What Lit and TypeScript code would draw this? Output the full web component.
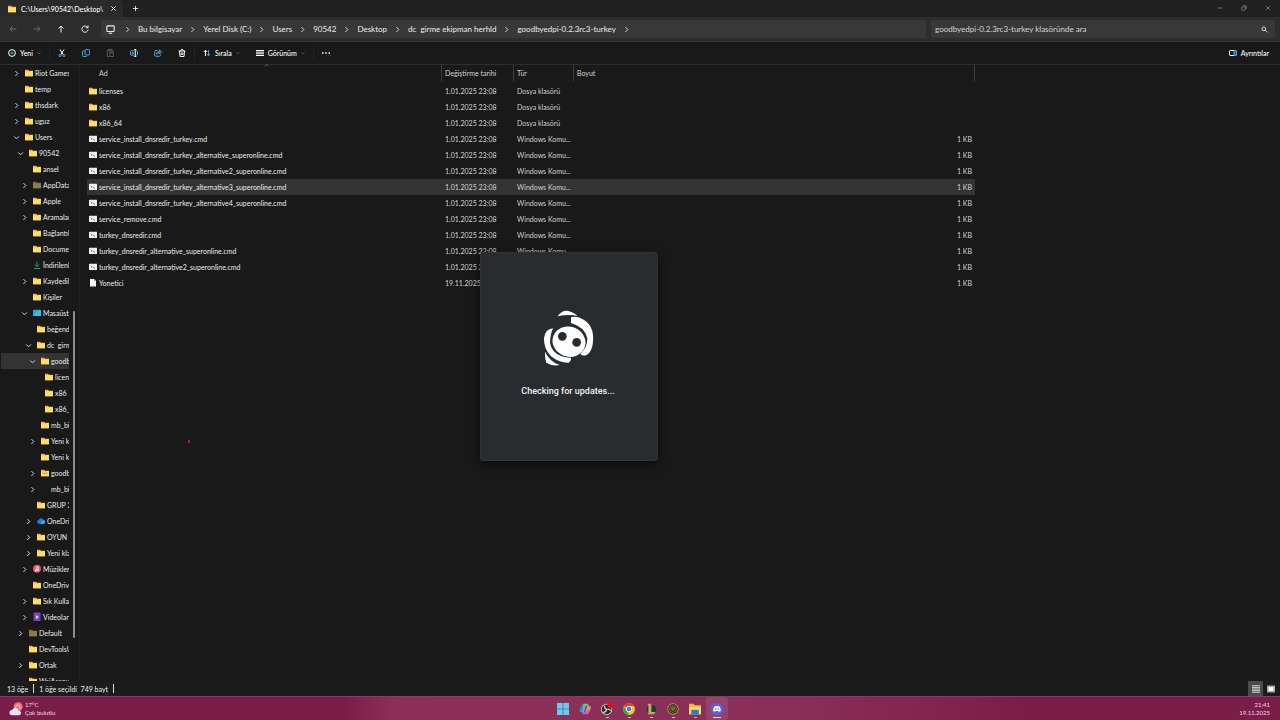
import { LitElement, html, css, svg, nothing } from "lit";
import { customElement, property } from "lit/decorators.js";
import { classMap } from "lit/directives/class-map.js";
import { styleMap } from "lit/directives/style-map.js";

const icons: Record<string, unknown> = {
  folder: svg`<path d="M0 1.500h6l2 2h8v11H0z" fill="#e8b931"/><path d="M0 4.500h16v10H0z" fill="#ffdc70"/>`,
  dim: svg`<path d="M0 1.500h6l2 2h8v11H0z" fill="#7d6c33"/><path d="M0 4.500h16v10H0z" fill="#8c7d47"/>`,
  zip: svg`<path d="M0 1.500h6l2 2h8v11H0z" fill="#e8b931"/><path d="M0 4.500h16v10H0z" fill="#ffdc70"/><path d="M3 8.500h10" stroke="#8d7a3c" stroke-width="1.500"/>`,
  cmd: svg`<rect x="0" y="1.500" width="16" height="12.500" rx="1" fill="#f1f1f1"/><path d="M3.500 5.500l3 2-2 2M8 8l4 3" stroke="#555" stroke-width="1.500" fill="none"/>`,
  file: svg`<path d="M2 0h8l4 4v11H2z" fill="#f6f6f6"/><path d="M10 0v4h4z" fill="#a9a9a9"/>`,
  download: svg`<path d="M8 1v10M3.500 7L8 11.500 12.500 7M2 15h12" stroke="#23a878" stroke-width="1.800" fill="none"/>`,
  desktop: svg`<rect y="1.500" width="16" height="12.500" rx="1.500" fill="#26a9d6"/><path d="M0 12L13 2h3v12H0z" fill="#3fcbe0" opacity=".7"/>`,
  cloud: svg`<path d="M4 13.500a4 4 0 0 1-.6-7.900A5.200 5.200 0 0 1 13 6a3.800 3.800 0 0 1-.5 7.500z" fill="#1c7fe0"/><path d="M6 13.500L13 6a3.800 3.800 0 0 1-.5 7.500z" fill="#3fb4f5"/>`,
  music: svg`<circle cx="8" cy="7.500" r="8" fill="#d9596b"/><path d="M6.500 11V4.500l4-1V10" stroke="#fff" stroke-width="1.400" fill="none"/><circle cx="5.500" cy="11" r="1.700" fill="#fff"/><circle cx="9.500" cy="10" r="1.700" fill="#fff"/>`,
  video: svg`<rect x="1" y="-1" width="14" height="17" rx="1.500" fill="#8140c9"/><path d="M1 2h2v2H1zm0 5h2v2H1zm0 5h2v2H1zM13 2h2v2h-2zm0 5h2v2h-2zm0 5h2v2h-2z" fill="#552397"/><path d="M6 4.500l5.500 3.500L6 11.500z" fill="#fff"/>`,
  right: svg`<path d="M5.500 2.500L11 8l-5.500 5.500" class="s"/>`,
  down: svg`<path d="M2.500 5.500L8 11l5.500-5.500" class="s"/>`,
  up: svg`<path d="M2.500 10.500L8 5l5.500 5.500" class="s"/>`,
  back: svg`<path d="M15 8H2M7 3L2 8l5 5" class="s"/>`,
  forward: svg`<path d="M1 8h13M9 3l5 5-5 5" class="s"/>`,
  parent: svg`<path d="M8 15V2M3 7l5-5 5 5" class="s"/>`,
  refresh: svg`<path d="M13.500 5A6.300 6.300 0 1 0 14.300 9M14 1v4.500H9.500" class="s"/>`,
  monitor: svg`<rect x="1.500" y="1.500" width="13" height="10" rx="1.500" class="s"/><path d="M5 14.700h6" class="s"/>`,
  close: svg`<path d="M3 3l10 10M13 3L3 13" class="s"/>`,
  plus: svg`<path d="M8 2v12M2 8h12" class="s"/>`,
  minus: svg`<path d="M2 8h12" class="s"/>`,
  restore: svg`<rect x="2" y="5" width="9" height="9" rx="1.500" class="s"/><path d="M5.500 2H12q2 0 2 2v6.500" class="s"/>`,
  search: svg`<circle cx="6.500" cy="6.500" r="4.200" class="s"/><path d="M9.700 9.700L14.500 14.500" class="s"/>`,
  add: svg`<circle cx="8" cy="8" r="6.800" class="s"/><path d="M8 5v6M5 8h6" class="b"/>`,
  cut: svg`<path d="M4 1l6.500 10.500M12 1L5.500 11.500" class="s"/><circle cx="4" cy="13" r="2.200" class="b"/><circle cx="12" cy="13" r="2.200" class="b"/>`,
  copy: svg`<path d="M5 4H2.500Q1 4 1 5.500v8Q1 15 2.500 15H8q1.500 0 1.500-1.500" class="b"/><rect x="6" y="1" width="9" height="11" rx="1.500" class="b"/>`,
  paste: svg`<path d="M5 2.500H2.500v12.500H6M11 2.500h2.500v3M5 1h6v3H5z" class="s"/><rect x="8" y="7" width="6.500" height="8" class="s"/>`,
  rename: svg`<path d="M8 3.500H2.500Q1 3.500 1 5v6q0 1.500 1.500 1.500H8M13 3.500q2 0 2 1.500v6q0 1.500-2 1.500M3.500 10.500L5.500 6l2 4.500" class="b"/><path d="M10.500 1v14M8.500 1h4M8.500 15h4" class="s"/>`,
  share: svg`<path d="M7 3H3.500Q1.500 3 1.500 5v7.500q0 2 2 2H11q2 0 2-2V11" class="b"/><path d="M5 10q.5-5 6-5V1.500L15 6l-4 4V7.500Q7 7.500 5 10z" class="b"/>`,
  trash: svg`<path d="M1.500 4h13M3 4l1 11h8l1-11M5.500 3.500q0-2.500 2.500-2.500t2.500 2.500M6.500 7v5M9.500 7v5" class="s"/>`,
  sort: svg`<path d="M5 14V2.500M1.500 6L5 2.500 8.500 6" class="s"/><path d="M11 2v11.500M7.500 10l3.500 3.500L14.500 10" class="b"/>`,
  view: svg`<path d="M0 3h16M0 6.300h16M0 9.600h16M0 13h16" class="s"/>`,
  dots: svg`<path d="M0 6.500h3v3H0zm6.500 0h3v3h-3zm6.500 0h3v3h-3z" fill="currentColor"/>`,
  details: svg`<path d="M10 3H2.500Q1 3 1 4.500v7Q1 13 2.500 13H10" class="s"/><path d="M10 3h4q1 0 1 1v8q0 1-1 1h-4z" fill="#2f6c93"/><path d="M10 3h4q1 0 1 1v8q0 1-1 1h-4z" class="b"/>`,
  list: svg`<path d="M0 1.500h16M0 4.750h16M0 8h16M0 11.250h16M0 14.500h16" stroke="#d0d0d0" stroke-width="2"/>`,
  thumbs: svg`<rect x="0" y="1" width="16" height="14" rx="1" fill="#a8a8a8"/><rect x="3" y="4" width="10" height="8" fill="#fff"/>`,
  weather: svg`<circle cx="10.500" cy="5.500" r="5.200" fill="#ef6f76"/><path d="M8 7a2.500 2.500 0 1 1 3 1" stroke="#ffd0cc" fill="none"/><path d="M3.500 15a3 3 0 0 1 0-6 4 4 0 0 1 7.500 1 2.500 2.500 0 0 1 .5 5z" fill="#dce8fa"/>`,
  windows: svg`<path d="M0 0h7.600v7.600H0zM8.400 0H16v7.600H8.400zM0 8.400h7.600V16H0zM8.400 8.400H16V16H8.400z" fill="#62cdf5"/>`,
  copilot: svg`<path d="M5 1h5l-3.500 11H2Q0 12 1 9z" fill="#2f8fe6"/><path d="M6 1h5q1.500 0 2 3H8.500L6.500 12H2l3-1z" fill="#59c98c"/><path d="M11 4h3q2 0 1.500 3l-2 6q-.7 2-2.500 2H6q-2 0-2.500-3h4z" fill="#c65bd0"/><path d="M11 4h3q2 0 1.500 3L14.500 10H9z" fill="#f08d56"/>`,
  obs: svg`<circle cx="7.500" cy="8.500" r="7.500" fill="#ddd"/><circle cx="7.500" cy="8.500" r="6.500" fill="#26242a"/><path d="M7.500 8.500Q4 7.500 5 3.500M7.500 8.500q4-1 5.500 2M7.500 8.500q-.5 4-4.500 4" stroke="#d4d4d4" stroke-width="1.600" fill="none"/><circle cx="12.500" cy="3" r="3.800" fill="#f00b16"/>`,
  chrome: svg`<circle cx="8" cy="8" r="8" fill="#fbc116"/><path d="M8 8L1 4.100A8 8 0 0 1 15 4.100H8z" fill="#e33b2e"/><path d="M1 4.100L4.600 10 8 16A8 8 0 0 1 1 4.100z" fill="#2da94f"/><circle cx="8" cy="8" r="4" fill="#fff"/><circle cx="8" cy="8" r="3" fill="#377ce8"/>`,
  league: svg`<circle cx="8.500" cy="8.500" r="6.500" fill="#1c3d3a"/><path d="M3 1h5.500v11H14l-2 3H3l1.500-2V3z" fill="#c9a65a"/>`,
  riot: svg`<circle cx="8" cy="8" r="7.600" fill="#b39a4c"/><circle cx="8" cy="8" r="6.300" fill="#17191a"/><circle cx="8" cy="8" r="4.500" fill="none" stroke="#8d7b42" stroke-width="1.300"/><path d="M5 6l3-1.500L11 6v3l-3 2-3-2z" fill="#746a43"/>`,
  explorer: svg`<path d="M0 1h6l2 2h8v12H0z" fill="#f1b92e"/><path d="M0 5h16v10H0z" fill="#ffdb72"/><path d="M3 9h10v6H3z" fill="#2781c9"/>`,
  discord: svg`<circle cx="8" cy="8" r="8" fill="#5663ee"/><path d="M4.500 4.500Q8 3.300 11.500 4.500q1.700 3 1.500 6-1.500 1.200-2.500 1l-.6-1H6.100l-.6 1q-1 .2-2.500-1-.2-3 1.500-6z" fill="#fff"/><circle cx="6.200" cy="8" r="1.100" fill="#5663ee"/><circle cx="9.800" cy="8" r="1.100" fill="#5663ee"/>`,
};

@customElement("ui-icon")
class UiIcon extends LitElement {
  @property() name = "";
  static styles = css`
    :host { display: inline-flex; flex: none; width: 8px; height: 8px; }
    svg { display: block; width: 100%; height: 100%; overflow: visible; }
    .s, .b { fill: none; stroke: currentColor; stroke-width: 2; }
    .b { stroke: #4ba7d6; }
  `;
  render() {
    return html`<svg viewBox="0 0 16 16" aria-hidden="true">${icons[this.name] ?? nothing}</svg>`;
  }
}

type Node = [depth: number, chevron: string, icon: string, label: string];
const tree: Node[] = [
  [0, "right", "folder", "Riot Games"], [0, "", "folder", "temp"], [0, "right", "folder", "thsdark"],
  [0, "right", "folder", "uguz"], [0, "down", "folder", "Users"], [1, "down", "folder", "90542"],
  [2, "", "folder", "ansel"], [2, "right", "dim", "AppData"], [2, "right", "folder", "Apple"],
  [2, "right", "folder", "Aramalar"], [2, "", "folder", "Bağlantılar"], [2, "", "folder", "Documents"],
  [2, "", "download", "İndirilenler"], [2, "right", "folder", "Kaydedilen"], [2, "", "folder", "Kişiler"],
  [2, "down", "desktop", "Masaüstü"], [3, "", "folder", "beğendim"], [3, "down", "folder", "dc  girme"],
  [4, "down", "folder", "goodbyedpi"], [5, "", "folder", "licenses"], [5, "", "folder", "x86"],
  [5, "", "folder", "x86_64"], [4, "", "folder", "mb_bios"], [4, "right", "folder", "Yeni klasör"],
  [4, "", "folder", "Yeni klasör"], [4, "right", "zip", "goodbyedpi"], [4, "right", "none", "mb_bios"],
  [3, "", "folder", "GRUP 2"], [3, "right", "cloud", "OneDrive"], [3, "right", "folder", "OYUN"],
  [3, "right", "folder", "Yeni klasör"], [2, "right", "music", "Müzikler"], [2, "", "folder", "OneDrive"],
  [2, "right", "folder", "Sık Kullanılanlar"], [2, "right", "video", "Videolar"], [1, "right", "dim", "Default"],
  [1, "", "folder", "DevToolsUser"], [1, "right", "folder", "Ortak"], [1, "", "folder", "WsiAccount"],
];
const selectedNode = 18;

const dir = (name: string) => ({ name, icon: "folder", date: "1.01.2025 23:08", type: "Dosya klasörü", size: "" });
const cmd = (name: string) => ({ name: name + ".cmd", icon: "cmd", date: "1.01.2025 23:08", type: "Windows Komu...", size: "1 KB" });
const files = [
  dir("licenses"), dir("x86"), dir("x86_64"),
  cmd("service_install_dnsredir_turkey"),
  cmd("service_install_dnsredir_turkey_alternative_superonline"),
  cmd("service_install_dnsredir_turkey_alternative2_superonline"),
  cmd("service_install_dnsredir_turkey_alternative3_superonline"),
  cmd("service_install_dnsredir_turkey_alternative4_superonline"),
  cmd("service_remove"), cmd("turkey_dnsredir"),
  cmd("turkey_dnsredir_alternative_superonline"),
  cmd("turkey_dnsredir_alternative2_superonline"),
  { name: "Yonetici", icon: "file", date: "19.11.2025 21:40", type: "", size: "1 KB" },
];
const selectedFile = 6;

const crumbs = ["Bu bilgisayar", "Yerel Disk (C:)", "Users", "90542", "Desktop", "dc  girme ekipman herhld", "goodbyedpi-0.2.3rc3-turkey"];
const apps = [
  ["windows", "Başlat", ""], ["copilot", "Copilot", ""], ["obs", "OBS Studio", "open"], ["chrome", "Chrome", "open"],
  ["league", "League", "open"], ["riot", "İstemci", "open"], ["explorer", "Dosya Gezgini", "open"], ["discord", "Discord", "active"],
];

@customElement("app-root")
class AppRoot extends LitElement {
  static styles = css`
    :host {
      display: flex; flex-direction: column; height: 100vh; position: relative; overflow: hidden;
      background: #191919; color: #ececec; font: 7px/16px Lato, "Noto Sans", sans-serif;
    }
    * { box-sizing: border-box; }
    button {
      display: flex; align-items: center; border: 0; padding: 0; margin: 0; background: none;
      color: inherit; font: inherit; white-space: pre;
    }
    a { color: inherit; text-decoration: none; }

    .tabs { display: flex; height: 17px; background: #202020; }
    .tab { display: flex; align-items: center; gap: 5px; width: 123px; padding: 0 6px 0 8px; background: #2a2a2a; border-radius: 0 4px 0 0; color: #fff; font-weight: 500; }
    .tab span { flex: 1; white-space: nowrap; }
    .tab ui-icon { width: 8px; height: 8px; }
    .tab button ui-icon, .new ui-icon { width: 7px; height: 7px; }
    .new { width: 24px; justify-content: center; }
    .window { display: flex; margin-left: auto; color: #8a8a8a; }
    .window button { width: 24px; height: 15px; justify-content: center; }
    .window ui-icon { width: 6px; height: 6px; }

    .nav { display: flex; align-items: center; height: 25px; padding: 0 5px 0 1px; background: #2d2d2d; border-bottom: 1px solid #353535; font-size: 8px; }
    .nav > button { width: 24px; height: 18px; justify-content: center; }
    .nav > button:disabled { color: #6c6c6c; }
    .path { flex: 1; display: flex; align-items: center; height: 18px; margin: 0 5px 0 4px; padding-left: 5px; background: #383838; border-radius: 2px; white-space: pre; }
    .path > ui-icon { width: 9px; height: 9px; margin-right: 2px; }
    .path .sep { display: flex; justify-content: center; width: 21px; }
    .path .sep ui-icon { width: 7px; height: 7px; }
    .find { display: flex; align-items: center; width: 27%; height: 18px; padding: 0 7px 0 4px; background: #383838; border-radius: 2px; }
    .find input { flex: 1; min-width: 0; border: 0; padding: 0; outline: 0; background: none; color: #ddd; font: inherit; }
    .find input::placeholder { color: #d4d4d4; opacity: 1; }
    .find ui-icon { width: 7px; height: 7px; }

    .tools { display: flex; align-items: center; height: 23px; border-bottom: 1px solid #2e2e2e; color: #fff; font-weight: 500; }
    .tools > button { height: 22px; gap: 4px; padding: 0 8px; }
    .tools .tool { width: 24px; justify-content: center; padding: 0; }
    .tools .off { color: #5a5a5a; }
    .tools .caret { width: 4px; height: 4px; color: #999; }
    .tools .bar { width: 1px; height: 15px; background: #242424; }
    .tools .details { margin-left: auto; padding-right: 11px; }

    .body { flex: 1; min-height: 0; display: flex; }
    .tree { width: 80px; position: relative; overflow: hidden; border-right: 1px solid #222; }
    .tree ul { list-style: none; margin: 0; padding: 0 10px 0 1px; }
    .tree li { height: 16px; overflow: hidden; }
    .tree li.on { background: #333; }
    .tree button { width: 100%; height: 16px; overflow: hidden; }
    .tree .chev { width: 7px; height: 7px; margin-right: 5px; }
    .tree .name { margin-left: 2px; }
    .thumb { position: absolute; right: 4px; top: 40%; width: 2px; bottom: 7%; background: #8d8d8d; border-radius: 1px; }

    .files { flex: 1; min-width: 0; padding-left: 7px; overflow: hidden; }
    table { width: 888px; table-layout: fixed; border-collapse: separate; border-spacing: 0; }
    th, td { height: 16px; padding: 0 3px; text-align: left; font-weight: 400; white-space: nowrap; overflow: hidden; color: #d2d2d2; }
    th { border-right: 1px solid #3d3d3d; }
    thead th:first-child { padding-left: 12px; }
    .c-name { width: 355px; } .c-date { width: 72px; } .c-type { width: 60px; }
    .gap td { height: 2px; }
    .sort { position: absolute; left: 264px; top: 63px; width: 5px; height: 5px; color: #888; }
    tbody td:first-child { padding-left: 2px; color: #ececec; }
    tbody td:last-child { text-align: right; }
    tbody .on td { background: #333; }
    .cell { display: flex; align-items: center; gap: 2px; }

    .status { display: flex; align-items: center; height: 15px; padding-left: 7px; gap: 5px; background: #1c1c1c; white-space: pre; }
    .status i { width: 1px; height: 9px; background: #ddd; }
    .status .views { display: flex; margin-left: auto; padding-right: 2px; }
    .status .views button { width: 15px; height: 15px; justify-content: center; }
    .status .views .on { background: #4b4b4b; }

    .taskbar {
      display: grid; grid-template-columns: 1fr auto 1fr; height: 24px; font-size: 6px; line-height: 8px; color: #f0dbe5;
      background: linear-gradient(90deg, #7b1d49 27%, #8c3059 31%, #8a2f59 62%, #7b1d49 80%);
      border-top: 1px solid #8b3a60;
    }
    .weather { padding-left: 9px; gap: 2px; text-align: left; }
    .weather ui-icon { width: 14px; height: 14px; }
    .apps { display: flex; }
    .apps button { position: relative; width: 22px; justify-content: center; border-radius: 3px; }
    .apps ui-icon { width: 12px; height: 12px; }
    .apps .open::after, .apps .active::after {
      content: ""; position: absolute; left: 50%; bottom: 2px; width: 3px; height: 1px; margin-left: -1px; background: #d5b0c1;
    }
    .apps .active { background: #94416c; }
    .apps .active::after { width: 8px; margin-left: -4px; background: #f1cfdd; }
    .clock { padding-right: 10px; justify-self: end; text-align: right; }

    .dialog {
      position: absolute; left: 480px; top: 252px; width: 178px; height: 209px; padding: 57px 2px 0 0;
      display: flex; flex-direction: column; align-items: center; gap: 16px;
      background: #292c2f; border: 1px solid #303336; border-radius: 3px; box-shadow: 0 3px 10px #0009;
      color: #f1f1f1; font: 500 9px/16px Roboto, "Noto Sans", sans-serif;
    }
    .dialog svg { width: 51px; height: 57px; }
    .dialog p { margin: 0; }
    .pointer { position: absolute; left: 188px; top: 440px; width: 2px; height: 3px; background: #c5008c; }
  `;

  private tool(name: string, label: string, off = false) {
    return html`<button class=${classMap({ tool: true, off })} aria-label=${label}><ui-icon name=${name}></ui-icon></button>`;
  }

  render() {
    return html`
      <header>
        <div class="tabs">
          <div class="tab"><ui-icon name="folder"></ui-icon><span>C:\\Users\\90542\\Desktop\\</span><button aria-label="Sekmeyi kapat"><ui-icon name="close"></ui-icon></button></div>
          <button class="new" aria-label="Yeni sekme"><ui-icon name="plus"></ui-icon></button>
          <div class="window">
            ${[["minus", "Simge durumuna küçült"], ["restore", "Geri yükle"], ["close", "Kapat"]].map(([i, l]) => html`<button aria-label=${l}><ui-icon name=${i}></ui-icon></button>`)}
          </div>
        </div>
        <div class="nav">
          <button disabled aria-label="Geri"><ui-icon name="back"></ui-icon></button>
          <button disabled aria-label="İleri"><ui-icon name="forward"></ui-icon></button>
          <button aria-label="Yukarı"><ui-icon name="parent"></ui-icon></button>
          <button aria-label="Yenile"><ui-icon name="refresh"></ui-icon></button>
          <nav class="path"><ui-icon name="monitor"></ui-icon><span class="sep"><ui-icon name="right"></ui-icon></span>${crumbs.map((c) => html`<a href="#">${c}</a><span class="sep"><ui-icon name="right"></ui-icon></span>`)}</nav>
          <label class="find"><input type="search" aria-label="Ara" placeholder="goodbyedpi-0.2.3rc3-turkey klasöründe ara" /><ui-icon name="search"></ui-icon></label>
        </div>
        <div class="tools">
          <button><ui-icon name="add"></ui-icon>Yeni<ui-icon class="caret" name="down"></ui-icon></button>
          <span class="bar"></span>
          ${this.tool("cut", "Kes")}${this.tool("copy", "Kopyala")}${this.tool("paste", "Yapıştır", true)}
          ${this.tool("rename", "Yeniden adlandır")}${this.tool("share", "Paylaş")}${this.tool("trash", "Sil")}
          <span class="bar"></span>
          <button><ui-icon name="sort"></ui-icon>Sırala<ui-icon class="caret" name="down"></ui-icon></button>
          <button><ui-icon name="view"></ui-icon>Görünüm<ui-icon class="caret" name="down"></ui-icon></button>
          <span class="bar"></span>
          ${this.tool("dots", "Daha fazla")}
          <button class="details"><ui-icon name="details"></ui-icon>Ayrıntılar</button>
        </div>
      </header>

      <div class="body">
        <nav class="tree">
          <ul>
            ${tree.map(([depth, chevron, icon, label], i) => html`
              <li class=${classMap({ on: i === selectedNode })}>
                <button style=${styleMap({ paddingLeft: `${12 + depth * 4}px` })}><ui-icon class="chev" name=${chevron}></ui-icon><ui-icon name=${icon}></ui-icon><span class="name">${label}</span></button>
              </li>`)}
          </ul>
          <div class="thumb"></div>
        </nav>
        <main class="files">
          <table>
            <thead><tr><th class="c-name">Ad</th><th class="c-date">Değiştirme tarihi</th><th class="c-type">Tür</th><th>Boyut</th></tr></thead>
            <tbody>
              <tr class="gap"><td colspan="4"></td></tr>
              ${files.map((f, i) => html`
                <tr class=${classMap({ on: i === selectedFile })}>
                  <td><span class="cell"><ui-icon name=${f.icon}></ui-icon>${f.name}</span></td>
                  <td>${f.date}</td><td>${f.type}</td><td>${f.size}</td>
                </tr>`)}
            </tbody>
          </table>
        </main>
      </div>

      <footer class="status">
        <span>13 öğe</span><i></i><span>1 öğe seçildi  749 bayt</span><i></i>
        <div class="views">
          <button class="on" aria-label="Ayrıntılar görünümü"><ui-icon name="list"></ui-icon></button>
          <button aria-label="Küçük resim görünümü"><ui-icon name="thumbs"></ui-icon></button>
        </div>
      </footer>

      <footer class="taskbar">
        <button class="weather"><ui-icon name="weather"></ui-icon><span>17°C<br />Çok bulutlu</span></button>
        <div class="apps">${apps.map(([i, l, c]) => html`<button class=${c} aria-label=${l}><ui-icon name=${i}></ui-icon></button>`)}</div>
        <button class="clock"><span>21:41<br />19.11.2025</span></button>
      </footer>

      <ui-icon class="sort" name="up"></ui-icon>
      <div class="pointer"></div>
      <section class="dialog" role="dialog" aria-label="Discord">
        <svg viewBox="220 195 153 171" aria-hidden="true">
          <defs><filter id="soft" x="-10%" y="-10%" width="120%" height="120%"><feGaussianBlur stdDeviation="2" /></filter></defs>
          <g filter="url(#soft)" fill="#fff">
            <path d="M264 214Q274 197 291 197Q306 199 324 212Q292 207 264 214z" />
            <path d="M304 217Q316 213 332 219Q354 228 364 248Q372 264 370 290Q368 318 352 329Q340 335 332 327Q354 306 353 280Q346 246 304 234z" />
            <path d="M250 250Q226 252 223 280Q222 312 244 334Q268 354 298 353Q306 346 304 338Q270 338 252 318Q238 300 242 280Q244 262 250 250z" />
            <path d="M226 320Q240 350 270 360Q250 365 230 353Q225 340 226 320z" />
          </g>
          <ellipse cx="298" cy="290" rx="50" ry="45" fill="#fff" transform="rotate(20 298 290)" />
          <circle cx="278" cy="274" r="13" fill="#292c2f" /><circle cx="321" cy="292" r="13" fill="#292c2f" />
        </svg>
        <p>Checking for updates...</p>
      </section>
    `;
  }
}
